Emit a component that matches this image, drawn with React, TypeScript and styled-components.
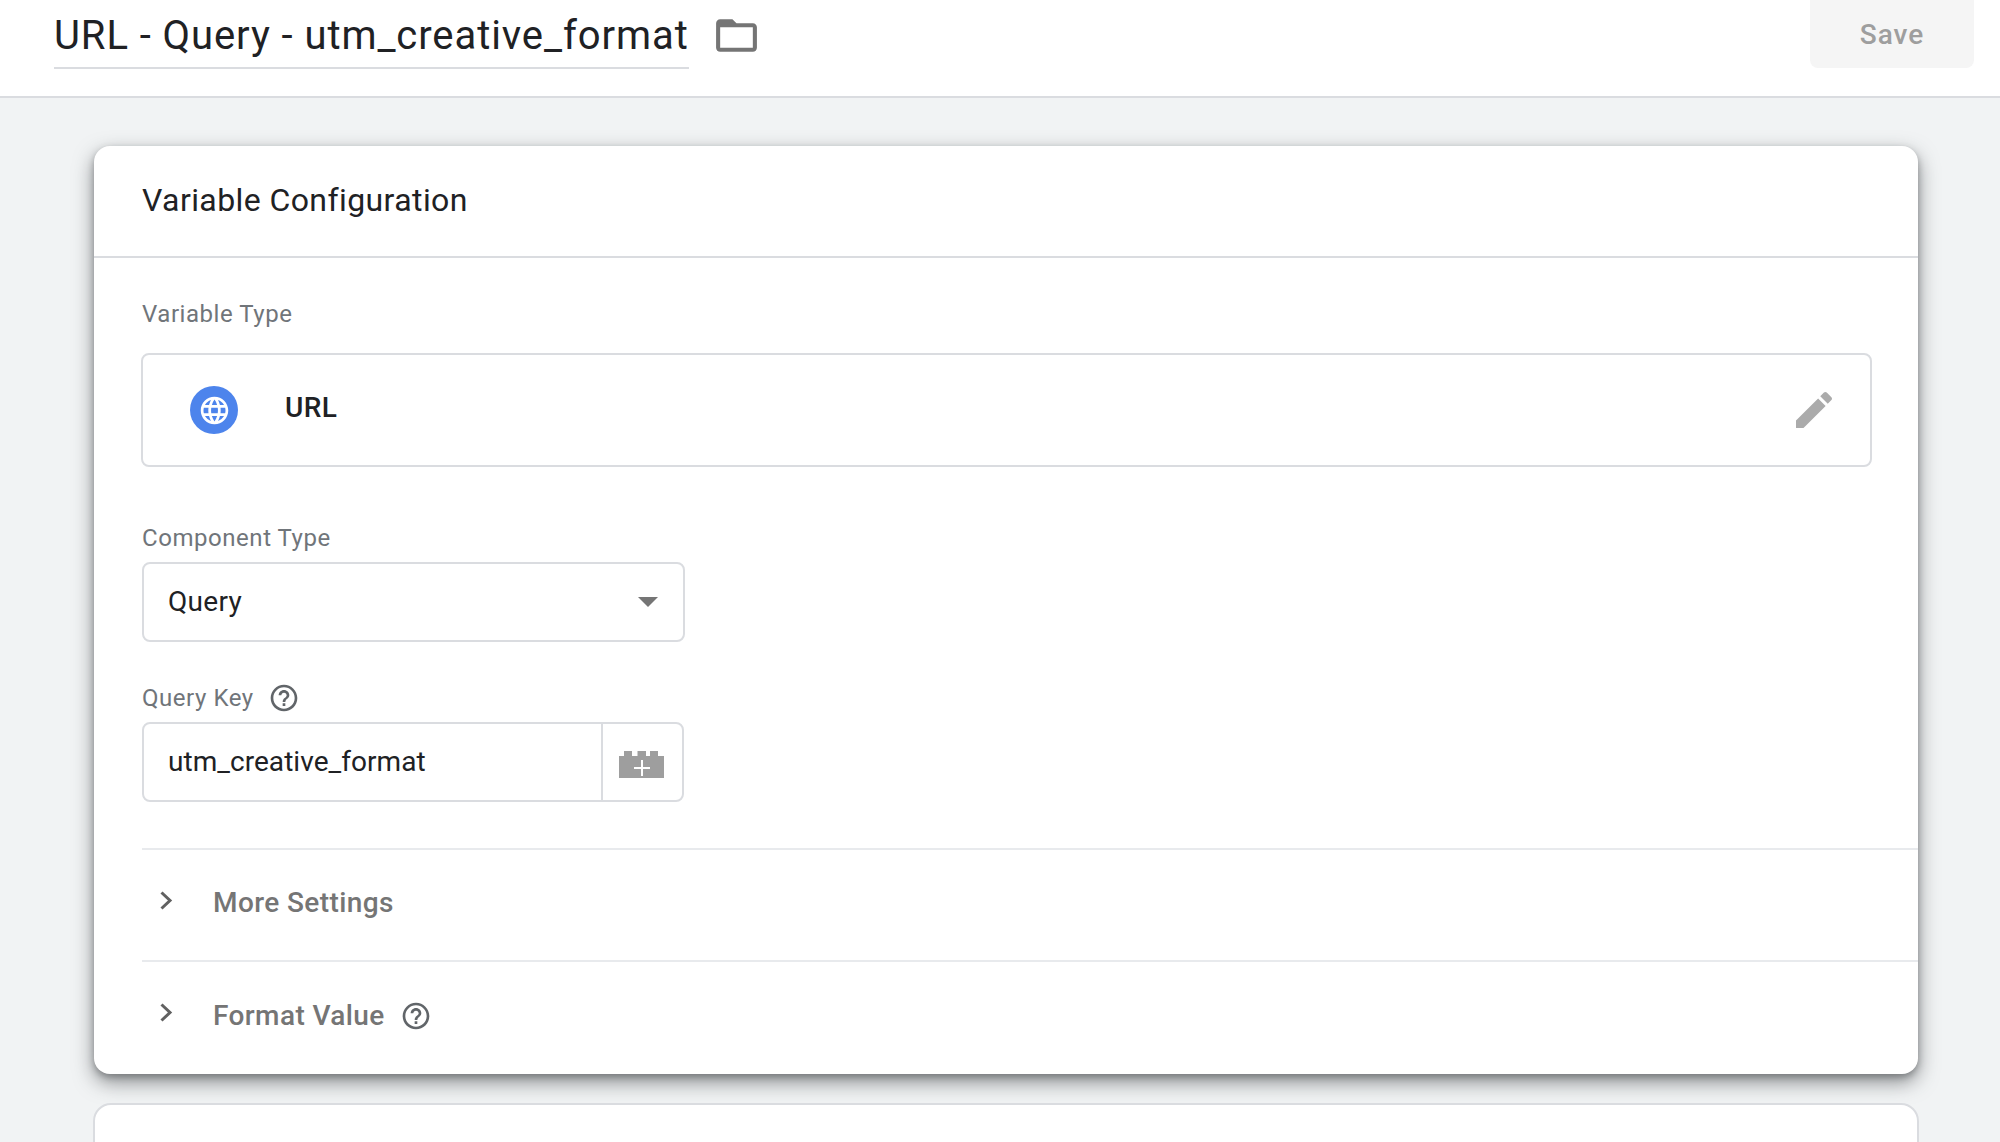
import React from "react";
import styled, { createGlobalStyle } from "styled-components";

const Global = createGlobalStyle`
  html, body { margin: 0; padding: 0; height: 100%; }
  body { font-family: Roboto, "Liberation Sans", sans-serif; background: #f1f3f4; }
`;

const Page = styled.div`
  height: 1142px;
  overflow: hidden;
  background: #f1f3f4;
`;

const Header = styled.header`
  box-sizing: border-box;
  height: 98px;
  background: #fff;
  border-bottom: 2px solid #dadce0;
  display: flex;
  align-items: flex-start;
  padding: 0 26px 0 54px;
`;

const TitleField = styled.h1`
  box-sizing: border-box;
  height: 69px;
  margin: 0;
  border-bottom: 2px solid #dadce0;
  font-family: Roboto, sans-serif;
  font-weight: 400;
  font-size: 40px;
  line-height: 72px;
  color: #202124;
  letter-spacing: 0.92px;
  white-space: nowrap;
`;

const FolderButton = styled.svg`
  width: 49px;
  height: 49px;
  margin: 11px 0 0 23px;
  fill: #757575;
`;

const SaveButton = styled.button`
  margin-left: auto;
  width: 164px;
  height: 68px;
  border: 0;
  border-radius: 0 0 8px 8px;
  background: #f5f5f5;
  color: #9e9e9e;
  font-family: Roboto, sans-serif;
  font-size: 28px;
  font-weight: 500;
  letter-spacing: 1px;
  padding: 0;
`;

const Content = styled.main`
  padding: 48px 81px 0 94px;
`;

const Card = styled.section`
  width: 1824px;
  height: 928px;
  border-radius: 16px;
  background: #fff;
  box-shadow: 0 8px 20px rgba(60, 64, 67, 0.58), 0 3px 6px rgba(60, 64, 67, 0.35);
  overflow: hidden;
`;

const CardHead = styled.div`
  box-sizing: border-box;
  height: 112px;
  border-bottom: 2px solid #dadce0;
  padding-left: 48px;
  font-size: 32px;
  line-height: 108px;
  color: #202124;
  letter-spacing: 0.41px;
`;

const CardBody = styled.div`
  padding: 40px 0 0 48px;
`;

const FieldLabel = styled.div`
  display: flex;
  align-items: center;
  gap: 14px;
  height: 32px;
  font-size: 24px;
  line-height: 32px;
  color: #70757a;
  letter-spacing: 0.55px;
`;

const TypeBox = styled.div`
  box-sizing: border-box;
  width: 1731px;
  height: 114px;
  margin: 23px 0 55px -1px;
  border: 2px solid #dadce0;
  border-radius: 8px;
  display: flex;
  align-items: center;
  padding: 0 32px 0 47px;
`;

const GlobeBadge = styled.span`
  width: 48px;
  height: 48px;
  border-radius: 50%;
  background: #4d84ec;
  display: flex;
  align-items: center;
  justify-content: center;
  svg { width: 33px; height: 33px; fill: #fff; }
`;

const TypeName = styled.span`
  margin: -5px 0 0 47px;
  font-size: 28px;
  font-weight: 500;
  color: #202124;
  letter-spacing: 0.4px;
`;

const EditIcon = styled.svg`
  width: 48px;
  height: 48px;
  margin-left: auto;
  fill: #ababab;
`;

const SelectBox = styled.div`
  box-sizing: border-box;
  width: 543px;
  height: 80px;
  margin: 8px 0 40px 0;
  border: 2px solid #dadce0;
  border-radius: 8px;
  display: flex;
  align-items: center;
  justify-content: space-between;
  padding: 0 25px 0 24px;
  font-size: 28px;
  color: #202124;
  letter-spacing: 0.3px;
`;

const SelectValue = styled.span`
  margin-top: -2px;
`;

const Caret = styled.span`
  width: 0;
  height: 0;
  border-left: 10px solid transparent;
  border-right: 10px solid transparent;
  border-top: 10px solid #757575;
`;

const InputGroup = styled.div`
  box-sizing: border-box;
  width: 542px;
  height: 80px;
  margin: 8px 0 46px 0;
  border: 2px solid #dadce0;
  border-radius: 8px;
  display: flex;
  align-items: stretch;
`;

const InputText = styled.div`
  box-sizing: border-box;
  width: 457px;
  display: flex;
  align-items: center;
  padding: 0 0 2px 24px;
  font-size: 28px;
  color: #202124;
  letter-spacing: 0.05px;
`;

const VariableButton = styled.div`
  flex: 1;
  border-left: 2px solid #dadce0;
  display: flex;
  align-items: center;
  justify-content: center;
  padding: 4px 2px 0 0;
`;

const Row = styled.div<{ $tall?: boolean }>`
  box-sizing: border-box;
  height: ${(p) => (p.$tall ? 113 : 112)}px;
  border-top: 2px solid #e8eaed;
  display: flex;
  align-items: center;
  padding-left: 18px;
  font-size: 28px;
  font-weight: 500;
  color: #757575;
  letter-spacing: 0.4px;
`;

const Chevron = styled.svg`
  width: 13px;
  height: 19px;
  margin: -10px 40px 0 0;
  fill: none;
  stroke: #616161;
  stroke-width: 3;
`;

const RowLabel = styled.span`
  margin-top: -5px;
`;

const HelpIcon = styled.svg<{ $row?: boolean }>`
  width: 32px;
  height: 32px;
  flex: none;
  fill: #616569;
  margin: ${(p) => (p.$row ? "-4px 0 0 15px" : "0")};
`;

const NextCard = styled.section`
  box-sizing: border-box;
  width: 1826px;
  height: 120px;
  margin: 29px 0 0 -1px;
  background: #fff;
  border: 2px solid #dadce0;
  border-radius: 18px;
`;

const help =
  "M11 18h2v-2h-2v2zm1-16C6.48 2 2 6.48 2 12s4.48 10 10 10 10-4.48 10-10S17.52 2 12 2zm0 18c-4.41 0-8-3.59-8-8s3.59-8 8-8 8 3.59 8 8-3.59 8-8 8zm0-14c-2.21 0-4 1.79-4 4h2c0-1.1.9-2 2-2s2 .9 2 2c0 2-3 1.75-3 5h2c0-2.25 3-2.5 3-5 0-2.21-1.79-4-4-4z";

const ChevronIcon = () => (
  <Chevron viewBox="0 0 13 19">
    <path d="M1.5 1.5 10 9.5 1.5 17.5" />
  </Chevron>
);

export default function App() {
  return (
    <Page>
      <Global />
      <Header>
        <TitleField>URL - Query - utm_creative_format</TitleField>
        <FolderButton viewBox="0 0 24 24">
          <path d="M20 6h-8l-2-2H4c-1.1 0-1.99.9-1.99 2L2 18c0 1.1.9 2 2 2h16c1.1 0 2-.9 2-2V8c0-1.1-.9-2-2-2zm0 12H4V8h16v10z" />
        </FolderButton>
        <SaveButton>Save</SaveButton>
      </Header>
      <Content>
        <Card>
          <CardHead>Variable Configuration</CardHead>
          <CardBody>
            <FieldLabel>Variable Type</FieldLabel>
            <TypeBox>
              <GlobeBadge>
                <svg viewBox="0 0 24 24">
                  <path d="M11.99 2C6.47 2 2 6.48 2 12s4.47 10 9.99 10C17.52 22 22 17.52 22 12S17.52 2 11.99 2zm6.93 6h-2.95c-.32-1.25-.78-2.45-1.38-3.56 1.84.63 3.37 1.91 4.33 3.56zM12 4.04c.83 1.2 1.48 2.53 1.91 3.96h-3.82c.43-1.43 1.08-2.76 1.91-3.96zM4.26 14C4.1 13.36 4 12.69 4 12s.1-1.36.26-2h3.38c-.08.66-.14 1.32-.14 2 0 .68.06 1.34.14 2H4.26zm.82 2h2.95c.32 1.25.78 2.45 1.38 3.56-1.84-.63-3.37-1.9-4.33-3.56zm2.95-8H5.08c.96-1.66 2.49-2.93 4.33-3.56C8.81 5.55 8.35 6.75 8.03 8zM12 19.96c-.83-1.2-1.48-2.53-1.91-3.96h3.82c-.43 1.43-1.08 2.76-1.91 3.96zM14.34 14H9.66c-.09-.66-.16-1.32-.16-2 0-.68.07-1.35.16-2h4.68c.09.65.16 1.32.16 2 0 .68-.07 1.34-.16 2zm.25 5.56c.6-1.11 1.06-2.31 1.38-3.56h2.95c-.96 1.65-2.49 2.93-4.33 3.56zM16.36 14c.08-.66.14-1.32.14-2 0-.68-.06-1.34-.14-2h3.38c.16.64.26 1.31.26 2s-.1 1.36-.26 2h-3.38z" />
                </svg>
              </GlobeBadge>
              <TypeName>URL</TypeName>
              <EditIcon viewBox="0 0 24 24">
                <path d="M3 17.25V21h3.75L17.81 9.94l-3.75-3.75L3 17.25zM20.71 7.04c.39-.39.39-1.02 0-1.41l-2.34-2.34c-.39-.39-1.02-.39-1.41 0l-1.83 1.83 3.75 3.75 1.83-1.83z" />
              </EditIcon>
            </TypeBox>
            <FieldLabel>Component Type</FieldLabel>
            <SelectBox>
              <SelectValue>Query</SelectValue>
              <Caret />
            </SelectBox>
            <FieldLabel>
              Query Key
              <HelpIcon viewBox="0 0 24 24">
                <path d={help} />
              </HelpIcon>
            </FieldLabel>
            <InputGroup>
              <InputText>utm_creative_format</InputText>
              <VariableButton>
                <svg width="45" height="27" viewBox="0 0 45 27">
                  <path
                    fill="#9e9e9e"
                    d="M5 0h8v5h5.5V0H27v5h4V0h8v5h6v22H0V5h5z"
                  />
                  <path fill="#fff" d="M22 16h-7v2h7v7h2v-7h7v-2h-7V9h-2z" />
                </svg>
              </VariableButton>
            </InputGroup>
            <Row>
              <ChevronIcon />
              <RowLabel>More Settings</RowLabel>
            </Row>
            <Row $tall>
              <ChevronIcon />
              <RowLabel>Format Value</RowLabel>
              <HelpIcon $row viewBox="0 0 24 24">
                <path d={help} />
              </HelpIcon>
            </Row>
          </CardBody>
        </Card>
        <NextCard />
      </Content>
    </Page>
  );
}
